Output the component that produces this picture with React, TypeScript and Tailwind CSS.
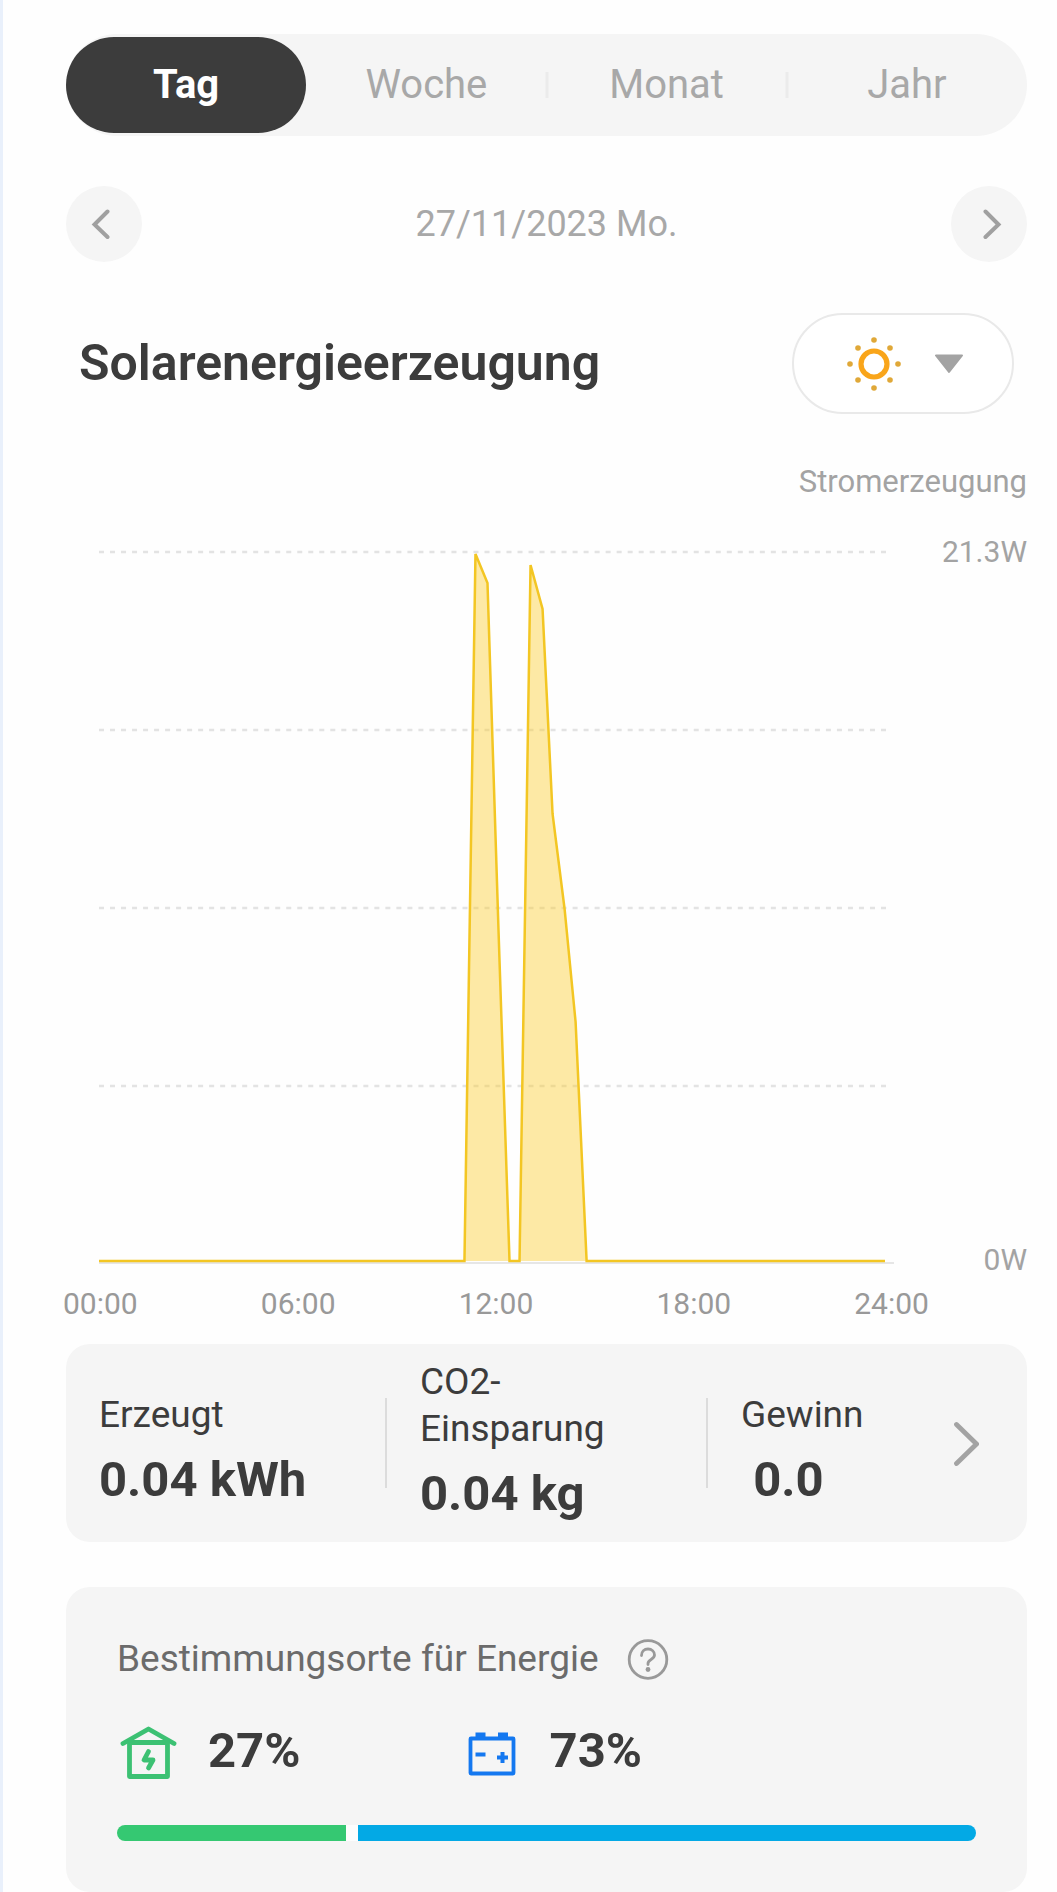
import React, { useState } from "react";

const tabs = ["Tag", "Woche", "Monat", "Jahr"];
const hours = ["00:00", "06:00", "12:00", "18:00", "24:00"];
const gridLines = [4, 182, 360, 538];

const stats = [
  { label: "Erzeugt", value: "0.04 kWh" },
  { label: "CO2-Einsparung", value: "0.04 kg", tall: true },
  { label: "Gewinn", value: "\u00a00.0" },
];

// Power curve, in the units of the chart's viewBox
const curve =
  "0,713 365,713 376,6 388,35 399,382 410,713 420,713 431,17 443,61 453,266 465,361 476,474 487,713 785,713";

const SunIcon: React.FC = () => (
  <svg className="size-14" viewBox="-28 -28 56 56" aria-hidden="true">
    <circle r="13" fill="none" stroke="#f9a51a" strokeWidth="5.2" />
    <g fill="#e0a838">
      <circle cx="0" cy="-24" r="2.8" />
      <circle cx="0" cy="24" r="2.8" />
      <circle cx="-24" cy="0" r="2.8" />
      <circle cx="24" cy="0" r="2.8" />
      <circle cx="-16" cy="-16" r="2.8" />
      <circle cx="16" cy="-16" r="2.8" />
      <circle cx="-16" cy="16" r="2.8" />
      <circle cx="16" cy="16" r="2.8" />
    </g>
  </svg>
);

const HouseIcon: React.FC = () => (
  <svg
    className="h-14 w-[60px]"
    viewBox="0 0 60 56"
    fill="none"
    stroke="#3cc173"
    strokeWidth="4.8"
    strokeLinecap="round"
    strokeLinejoin="round"
    aria-hidden="true"
  >
    <path d="M6 20.500 31.500 6 57 20.500" />
    <path d="M12.500 19.500h38v34h-38z" />
    <path d="M31.500 28.500l-4.500 8.500h9l-4.500 8" />
  </svg>
);

const BatteryIcon: React.FC = () => (
  <svg className="h-14 w-[58px]" viewBox="0 0 58 56" fill="#1478f0" aria-hidden="true">
    <rect x="9.5" y="15.5" width="43" height="35" rx="0.5" fill="none" stroke="#1478f0" strokeWidth="3.8" />
    <path d="M14.500 9.500h10v6h-10zM37 9.500h10v6H37zM14.500 29.500h10v4h-10zM36 32.500h11v4H36zM39.500 29h4v11h-4z" />
  </svg>
);

const ChevronLeft: React.FC = () => (
  <svg className="h-8 w-5" viewBox="0 0 20 32" fill="none" stroke="#a0a0a0" strokeWidth="4" strokeLinecap="round" aria-hidden="true">
    <path d="M17.500 3.500 4.500 16.500l13 12.500" />
  </svg>
);

const ChevronRight: React.FC = () => (
  <svg className="h-8 w-5" viewBox="0 0 20 32" fill="none" stroke="#a0a0a0" strokeWidth="4" strokeLinecap="round" aria-hidden="true">
    <path d="M2.500 3.500 15.500 16.500l-13 12.500" />
  </svg>
);

const App: React.FC = () => {
  const [activeTab, setActiveTab] = useState<string>("Tag");
  const [source, setSource] = useState<string>("solar");
  const home = 27;
  const battery = 73;

  return (
    <main className="min-h-screen border-l-3 border-[#e9f0fb] bg-[#fefefe] pt-[34px] pr-[30px] pl-[63px] font-[Roboto,sans-serif] text-[#3c3c3c]">
      <nav className="grid grid-cols-4 rounded-full bg-[#f5f5f5] py-[3px]">
        {tabs.map((tab, index) => (
          <div key={tab} className="relative flex items-center">
            <button
              onClick={() => setActiveTab(tab)}
              className={`h-24 flex-1 rounded-full text-[40px] ${
                tab === activeTab ? "bg-[#3c3c3c] font-bold text-white" : "text-[#a8a8a8]"
              }`}
            >
              {tab}
            </button>
            {index > 1 && <span className="absolute left-0 h-[26px] w-[3px] -translate-x-1/2 bg-[#ebebeb]" />}
          </div>
        ))}
      </nav>

      <div className="mt-[50px] flex items-center justify-between">
        <button aria-label="Vorheriger Tag" className="flex size-19 items-center rounded-full bg-[#f5f5f5] pl-6">
          <ChevronLeft />
        </button>
        <time dateTime="2023-11-27" className="text-[36px] text-[#a8a8a8]">
          27/11/2023 Mo.
        </time>
        <button aria-label="Nächster Tag" className="flex size-19 items-center justify-end rounded-full bg-[#f5f5f5] pr-6">
          <ChevronRight />
        </button>
      </div>

      <div className="mt-[51px] flex items-center justify-between px-[13px]">
        <h1 className="text-[50px] font-semibold">Solarenergieerzeugung</h1>
        <div className="relative h-[101px] w-[222px]">
          <select
            aria-label="Energiequelle"
            value={source}
            onChange={(e) => setSource(e.target.value)}
            className="size-full appearance-none rounded-full border-2 border-[#e9e9e9] bg-white text-transparent"
          >
            <option value="solar">Solar</option>
          </select>
          <div className="pointer-events-none absolute inset-0 flex items-center justify-between pr-[51px] pl-[54px]">
            <SunIcon />
            <svg className="h-5 w-7" viewBox="0 0 28 20" fill="#a3a3a3" stroke="#a3a3a3" strokeWidth="2" strokeLinejoin="round" aria-hidden="true">
              <path d="M1 1.500h26L14 18z" />
            </svg>
          </div>
        </div>
      </div>

      <section className="text-[30px] leading-9 text-[#a3a3a3]">
        <p className="mt-[50px] text-right text-[31px]">Stromerzeugung</p>
        <div className="mt-[34px] flex h-[744px] pl-[33px]">
          <svg className="my-[14px] h-[716px] min-w-0 flex-1" viewBox="0 0 794 716" preserveAspectRatio="none" role="img" aria-label="Solarenergieerzeugung">
            {gridLines.map((y) => (
              <line key={y} x1="0" x2="791" y1={y} y2={y} stroke="#e3e3e3" strokeWidth="2.4" strokeDasharray="5 6" />
            ))}
            <line x1="0" x2="794" y1="715" y2="715" stroke="#e6e6e6" strokeWidth="2" />
            <polygon points={curve} fill="#fcca20" fillOpacity="0.4" />
            <polyline points={curve} fill="none" stroke="#f3c623" strokeWidth="2.5" />
          </svg>
          <div className="flex w-[133px] flex-col justify-between text-right">
            <span>21.3W</span>
            <span>0W</span>
          </div>
        </div>
        <div className="mt-2 mr-[98px] -ml-[3px] flex justify-between text-[#999999]">
          {hours.map((hour) => (
            <span key={hour}>{hour}</span>
          ))}
        </div>
      </section>

      <section className="mt-[22px] flex items-center rounded-3xl bg-[#f5f5f5]">
        {stats.map((stat, index) => (
          <React.Fragment key={stat.label}>
            {index > 0 && <span className="h-[90px] w-[2px] bg-[#dcdcdc]" />}
            <div
              className={`flex-1 self-stretch pr-12 pb-5 pl-[33px] ${
                stat.tall ? "pt-[14px]" : "pt-[47px]"
              } ${index === 2 ? "flex justify-between" : ""}`}
            >
              <div>
                <p className="text-[37px] leading-[47px]">{stat.label}</p>
                <p className="mt-[14px] text-[49px] leading-14 font-bold">{stat.value}</p>
              </div>
              {index === 2 && (
                <button aria-label="Details" className="h-[106px]">
                  <svg className="h-12 w-7" viewBox="0 0 28 48" fill="none" stroke="#a3a3a3" strokeWidth="4.8" strokeLinecap="round" aria-hidden="true">
                    <path d="M5.500 4.500 25.500 24 5.500 43.500" />
                  </svg>
                </button>
              )}
            </div>
          </React.Fragment>
        ))}
      </section>

      <section className="mt-[45px] rounded-3xl bg-[#f5f5f5] px-[51px] pt-11 pb-[51px]">
        <div className="flex items-center gap-7">
          <h2 className="text-[37px] leading-14 text-[#6b6b6b]">Bestimmungsorte für Energie</h2>
          <button aria-label="Hilfe">
            <svg className="size-[42px]" viewBox="0 0 42 42" fill="none" stroke="#999999" strokeWidth="2.8" aria-hidden="true">
              <circle cx="21" cy="21.500" r="18.800" />
              <path d="M14.500 17.500c0-4 2.800-6.500 6.500-6.500s6.500 2.600 6.500 6c0 4.500-6.500 4.500-6.500 8.500v1" strokeLinecap="round" />
              <circle cx="21" cy="31.500" r="2.400" fill="#999999" stroke="none" />
            </svg>
          </button>
        </div>
        <div className="mt-9 flex text-[49px] leading-14 font-bold">
          <div className="flex w-2/5 items-center gap-[31px]">
            <HouseIcon />
            <span>{home}%</span>
          </div>
          <div className="flex items-center gap-[31px]">
            <BatteryIcon />
            <span>{battery}%</span>
          </div>
        </div>
        <div className="mt-[46px] flex h-4 gap-3 overflow-hidden rounded-full bg-[#fdfdfd]">
          <div className="bg-[#35c872]" style={{ flexGrow: home }} />
          <div className="bg-[#03a9e5]" style={{ flexGrow: battery }} />
        </div>
      </section>
    </main>
  );
};

export default App;
